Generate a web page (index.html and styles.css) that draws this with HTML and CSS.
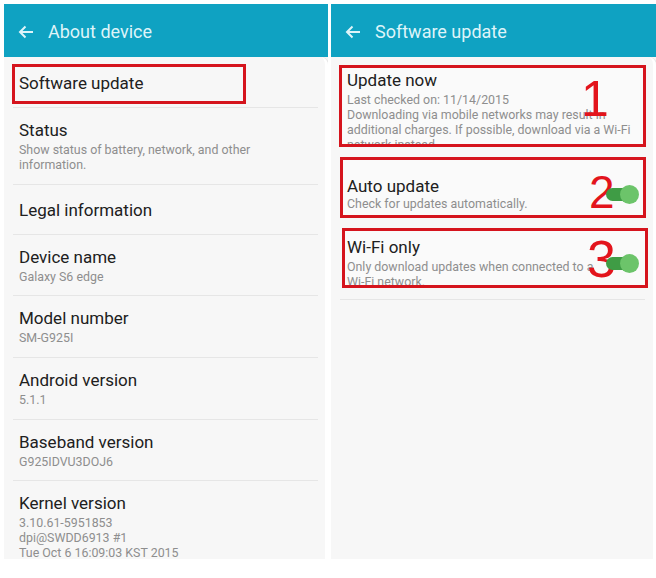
FILE: index.html
```html
<!DOCTYPE html>
<html lang="en">
<head>
  <meta charset="UTF-8">
  <meta name="viewport" content="width=device-width, initial-scale=1.0">
  <title>Software update</title>
  <link rel="stylesheet" href="styles.css">
</head>
<body>
  <div class="shots">

    <!-- About device -->
    <div class="screen screen-left">
      <div class="appbar">
        <svg class="back" width="16" height="14" viewBox="0 0 16 14"><path d="M15 7H2M7.5 1.5L2 7l5.5 5.5" fill="none" stroke="currentColor" stroke-width="2"/></svg>
        <span class="appbar-title">About device</span>
      </div>
      <div class="list">
        <div class="item item-first">
          <div class="item-title">Software update</div>
          <div class="mark mark-sw"></div>
        </div>
        <div class="item">
          <div class="item-title">Status</div>
          <div class="item-sub">Show status of battery, network, and other<br>information.</div>
        </div>
        <div class="item item-single">
          <div class="item-title">Legal information</div>
        </div>
        <div class="item">
          <div class="item-title">Device name</div>
          <div class="item-sub">Galaxy S6 edge</div>
        </div>
        <div class="item">
          <div class="item-title">Model number</div>
          <div class="item-sub">SM-G925I</div>
        </div>
        <div class="item">
          <div class="item-title">Android version</div>
          <div class="item-sub">5.1.1</div>
        </div>
        <div class="item">
          <div class="item-title">Baseband version</div>
          <div class="item-sub">G925IDVU3DOJ6</div>
        </div>
        <div class="item item-last">
          <div class="item-title">Kernel version</div>
          <div class="item-sub">3.10.61-5951853<br>dpi@SWDD6913 #1<br>Tue Oct 6 16:09:03 KST 2015</div>
        </div>
      </div>
    </div>

    <!-- Software update -->
    <div class="screen screen-right">
      <div class="appbar">
        <svg class="back" width="16" height="14" viewBox="0 0 16 14"><path d="M15 7H2M7.5 1.5L2 7l5.5 5.5" fill="none" stroke="currentColor" stroke-width="2"/></svg>
        <span class="appbar-title">Software update</span>
      </div>
      <div class="list list-boxed">
        <div class="box box-1">
          <div class="item-title">Update now</div>
          <div class="item-sub">Last checked on: 11/14/2015<br>Downloading via mobile networks may result in<br>additional charges. If possible, download via a Wi-Fi<br>network instead.</div>
          <span class="num num-1">1</span>
        </div>
        <div class="box box-2">
          <div class="item-title">Auto update</div>
          <div class="item-sub">Check for updates automatically.</div>
          <span class="num num-2">2</span>
          <span class="toggle"><span class="knob"></span></span>
        </div>
        <div class="box box-3">
          <div class="item-title">Wi-Fi only</div>
          <div class="item-sub">Only download updates when connected to a<br>Wi-Fi network.</div>
          <span class="num num-3">3</span>
          <span class="toggle"><span class="knob"></span></span>
        </div>
        <div class="rule"></div>
      </div>
    </div>

  </div>
</body>
</html>
```

FILE: styles.css
```css
body {
  margin: 0;
  background: #ffffff;
  font-family: Roboto, "Noto Sans", sans-serif;
}

.shots {
  display: flex;
  gap: 3px;
  padding: 4px 0 0 4px;
}

.screen {
  height: 555px;
  display: flex;
  flex-direction: column;
  background: #f7f7f7;
  overflow: hidden;
}

.screen-left {
  width: 324px;
}

.screen-right {
  width: 325px;
}

.appbar {
  height: 53px;
  flex-shrink: 0;
  display: flex;
  align-items: center;
  padding-top: 2px;
  box-sizing: border-box;
  background: #0fa2c2;
  color: #def4f9;
}

.back {
  margin: 0 14px 0 14px;
}

.appbar-title {
  font-size: 18px;
}

.list {
  flex: 1;
  position: relative;
  border-right: 3px solid #ffffff;
  border-top-right-radius: 8px;
  box-shadow: 1px 0 0 #e2e2e2;
}

.item {
  position: relative;
  margin: 0 7px 0 9px;
  padding: 12px 6px 11.7px;
  border-bottom: 1px solid #e6e6e6;
}

.item-first {
  padding: 16px 6px 14px;
}

.item-single {
  padding: 15px 6px 14px;
}

.item-last {
  border-bottom: none;
}

.item-title {
  font-size: 17px;
  line-height: 20px;
  color: #202020;
}

.item-sub {
  margin-top: 2px;
  font-size: 12.4px;
  line-height: 15px;
  color: #8e8e8e;
}

.mark {
  position: absolute;
  border: 3px solid #d5141d;
}

.mark-sw {
  left: -1px;
  top: 7px;
  width: 228px;
  height: 34px;
}

/* right screen boxes */
.list-boxed {
  padding-top: 8px;
}

.box {
  position: relative;
  overflow: hidden;
  border: 3px solid #d5141d;
  background: #fafafa;
  padding: 0 5px;
  box-sizing: border-box;
}

.box-1 {
  margin: 0 7px 0 8px;
  height: 82px;
  padding-top: 2px;
}

.box-1 .item-sub {
  margin-top: 1.5px;
}

.box-2 {
  margin: 10px 7px 0 9px;
  height: 61px;
  padding-top: 16px;
  padding-left: 4px;
}

.box-2 .item-sub {
  margin-top: 0;
}

.box-3 {
  margin: 10px 5px 0 11px;
  height: 60px;
  padding-top: 6px;
  padding-left: 2px;
}

.num {
  position: absolute;
  font-family: "Liberation Sans", Arial, sans-serif;
  font-size: 50px;
  line-height: 50px;
  color: #e3141c;
}

.num-1 {
  left: 239px;
  top: 6px;
}

.num-2 {
  left: 246px;
  top: 7px;
  font-size: 46px;
}

.num-3 {
  left: 242px;
  top: 3px;
  font-size: 52px;
}

.toggle {
  position: absolute;
  right: 10px;
  width: 27px;
  height: 13px;
  border-radius: 7px;
  background: #3f9c45;
}

.box-2 .toggle {
  top: 28px;
}

.box-3 .toggle {
  top: 26px;
  right: 12px;
}

.knob {
  position: absolute;
  right: -6px;
  top: -3px;
  width: 19px;
  height: 19px;
  border-radius: 50%;
  background: #6cc46a;
}

.rule {
  margin: 11px 8px 0 9px;
  border-top: 1px solid #e6e6e6;
}
```
